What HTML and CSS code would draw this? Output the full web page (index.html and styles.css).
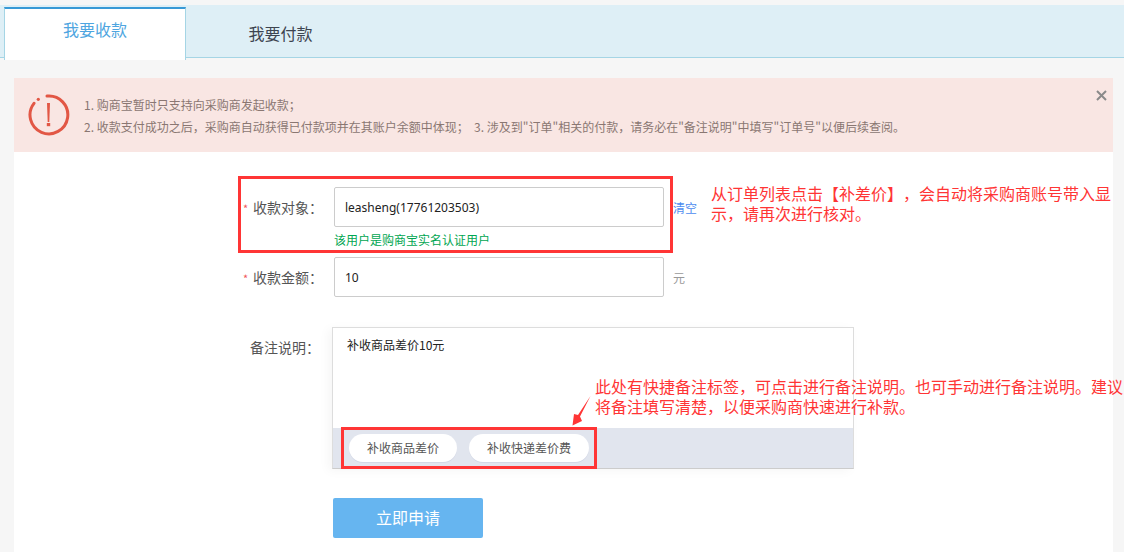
FILE: index.html
```html
<!DOCTYPE html>
<html lang="zh-CN">
<head>
<meta charset="utf-8">
<title>我要收款</title>
<link rel="stylesheet" href="styles.css">
</head>
<body>
<div class="tabs">
  <div class="tab active">我要收款</div>
  <div class="tab">我要付款</div>
</div>
<main class="panel">
  <div class="alert">
    <svg class="alert-icon" width="42" height="42" viewBox="0 0 42 42">
      <path d="M19 2.1A18.9 18.9 0 1 1 6 9.3" fill="none" stroke="#e25745" stroke-width="3" stroke-linecap="round"/>
      <circle cx="10.3" cy="5.3" r="1.6" fill="#e25745"/>
      <path d="M19 9h3l-.7 19h-1.6z" fill="#e25745"/>
      <rect x="18.8" y="29" width="3.4" height="3.2" fill="#e25745"/>
    </svg>
    <div class="alert-text">
      <p>1. 购商宝暂时只支持向采购商发起收款；</p>
      <p>2. 收款支付成功之后，采购商自动获得已付款项并在其账户余额中体现；&nbsp;&nbsp;3. 涉及到"订单"相关的付款，请务必在"备注说明"中填写"订单号"以便后续查阅。</p>
    </div>
    <svg class="alert-close" width="11" height="11" viewBox="0 0 11 11">
      <path d="M1 1l9 9M10 1l-9 9" fill="none" stroke="#8a8a8a" stroke-width="2"/>
    </svg>
  </div>
  <form class="form">
    <div class="row row-first">
      <label class="label"><i>*</i>收款对象：</label>
      <div class="field">
        <div class="input">leasheng(17761203503)</div>
        <div class="hint">该用户是购商宝实名认证用户</div>
      </div>
      <a class="clear">清空</a>
    </div>
    <div class="row row-amount">
      <label class="label"><i>*</i>收款金额：</label>
      <div class="field"><div class="input">10</div></div>
      <span class="unit">元</span>
    </div>
    <div class="row row-note">
      <label class="label">备注说明：</label>
      <div class="note">
        <div class="note-text">补收商品差价10元</div>
        <div class="note-tags">
          <span class="tag">补收商品差价</span>
          <span class="tag">补收快递差价费</span>
        </div>
      </div>
    </div>
    <button type="button" class="submit">立即申请</button>
  </form>
</main>
<div class="mark mark-target"></div>
<div class="mark mark-tags"></div>
<svg class="arrow" width="20" height="32" viewBox="0 0 20 32">
  <path d="M19.5 1 9 21.5 11 26 1.5 30.5 3 19 7 20z" fill="#ff3535"/>
</svg>
<p class="note-a">从订单列表点击【补差价】，会自动将采购商账号带入显示，请再次进行核对。</p>
<p class="note-b">此处有快捷备注标签，可点击进行备注说明。也可手动进行备注说明。建议将备注填写清楚，以便采购商快速进行补款。</p>
</body>
</html>
```
FILE: styles.css
```css
* { box-sizing: border-box; }
html, body { margin: 0; height: 552px; overflow: hidden; }
body {
  background: #f6f6f6;
  font-family: "Noto Sans CJK SC", "Liberation Sans", sans-serif;
  font-size: 12px;
  color: #333;
  position: relative;
  padding-top: 5px;
  text-spacing-trim: space-all;
}
.tabs {
  display: flex;
  height: 53px;
  padding-left: 4px;
  background: #deeff6;
  border-bottom: 1px solid #a5d5e5;
}
.tab {
  width: 182px;
  height: 52px;
  font-size: 16px;
  line-height: 24px;
  text-align: center;
  color: #3d4450;
}
.tab + .tab { padding: 16px 0 0 7px; }
.tab.active {
  height: 53px;
  margin-top: 2px;
  padding-top: 8px;
  background: #fff;
  color: #4ea5e0;
  border: 1px solid #a5d5e5;
  border-top: 2px solid #3799d6;
  border-bottom: 0;
}
.panel {
  margin: 20px 11px 0 14px;
  background: #fff;
  height: 474px;
}
.alert {
  height: 74px;
  background: #f9e6e3;
  display: flex;
  position: relative;
  padding: 16px 0 0 14px;
}
.alert-icon { flex: none; }
.alert-text {
  margin-left: 14px;
  color: #8a7772;
  line-height: 22px;
}
.alert-text p { margin: 0; }
.alert-close {
  position: absolute;
  right: 6px;
  top: 12px;
}
.form { padding: 35px 0 0 0; }
.row { display: flex; align-items: flex-start; }
.label {
  flex: none;
  width: 306px;
  padding-left: 229px;
  font-size: 14px;
  line-height: 40px;
  color: #555;
  white-space: nowrap;
}
.label i { font-style: normal; color: #f0565a; display: inline-block; width: 10px; font-size: 11px; }
.field { width: 330px; margin-left: 14px; }
.input {
  height: 40px;
  border: 1px solid #ccc;
  border-radius: 2px;
  padding-left: 10px;
  line-height: 40px;
  font-family: "Noto Sans", "Noto Sans CJK SC", sans-serif;
  font-size: 12px;
  color: #222;
}
.hint { color: #00a651; line-height: 18px; margin-top: 4px; }
.clear { color: #4d8df0; margin-left: 9px; line-height: 42px; }
.unit { color: #999; margin-left: 9px; line-height: 42px; }
.row-first { height: 70px; }
.row-amount { height: 70px; }
.row-note .label { margin-right: 14px; padding-left: 236px; line-height: 40px; width: 304px; }
.note {
  width: 522px;
  height: 142px;
  border: 1px solid #ddd;
  border-bottom-color: #ccc;
  box-shadow: -4px 2px 10px rgba(0,0,0,.04);
}
.note-text { height: 100px; padding: 7px 14px; line-height: 20px; color: #222; }
.note-tags {
  height: 40px;
  background: #e1e5ee;
  display: flex;
  align-items: center;
  gap: 12px;
  padding-left: 16px;
}
.tag {
  height: 28px;
  padding: 0 18px;
  line-height: 28px;
  background: #fff;
  border-radius: 14px;
  color: #555;
  box-shadow: 0 1px 0 #d3d8e6;
}
.submit {
  display: block;
  margin: 29px 0 0 319px;
  width: 150px;
  height: 40px;
  border: 0;
  border-radius: 2px;
  background: #66b5f0;
  color: #fff;
  padding: 0 0 2px;
  font: 16px/38px "Noto Sans CJK SC", sans-serif;
}
.mark { position: absolute; border: 3px solid #ff3535; }
.mark-target { left: 238px; top: 176px; width: 435px; height: 77px; }
.mark-tags { left: 341px; top: 427px; width: 256px; height: 42px; }
.arrow { position: absolute; left: 571px; top: 395px; }
.note-a, .note-b {
  position: absolute;
  margin: 0;
  color: #ff3535;
  font-size: 16px;
  line-height: 20px;
}
.note-a { left: 711px; top: 183px; width: 402px; }
.note-b { left: 595px; top: 376px; width: 528px; }
```
